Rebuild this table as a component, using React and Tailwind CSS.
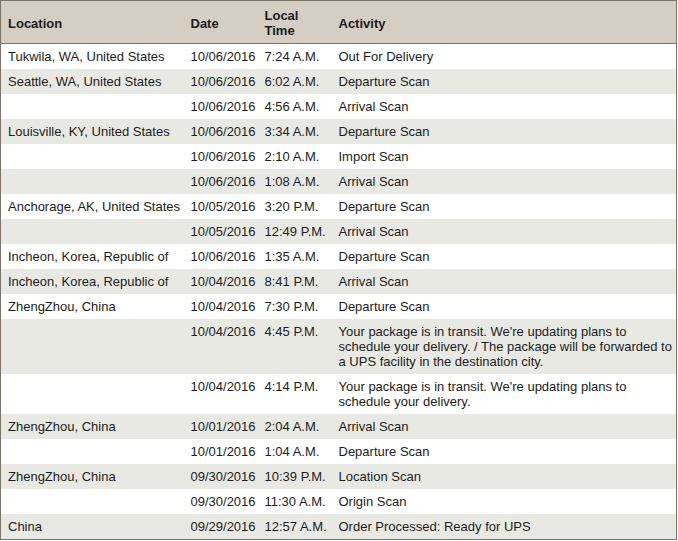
import React from 'react';

const rows = [
  ['Tukwila, WA, United States', '10/06/2016', '7:24 A.M.', 'Out For Delivery'],
  ['Seattle, WA, United States', '10/06/2016', '6:02 A.M.', 'Departure Scan'],
  ['', '10/06/2016', '4:56 A.M.', 'Arrival Scan'],
  ['Louisville, KY, United States', '10/06/2016', '3:34 A.M.', 'Departure Scan'],
  ['', '10/06/2016', '2:10 A.M.', 'Import Scan'],
  ['', '10/06/2016', '1:08 A.M.', 'Arrival Scan'],
  ['Anchorage, AK, United States', '10/05/2016', '3:20 P.M.', 'Departure Scan'],
  ['', '10/05/2016', '12:49 P.M.', 'Arrival Scan'],
  ['Incheon, Korea, Republic of', '10/06/2016', '1:35 A.M.', 'Departure Scan'],
  ['Incheon, Korea, Republic of', '10/04/2016', '8:41 P.M.', 'Arrival Scan'],
  ['ZhengZhou, China', '10/04/2016', '7:30 P.M.', 'Departure Scan'],
  [
    '',
    '10/04/2016',
    '4:45 P.M.',
    "Your package is in transit. We're updating plans to schedule your delivery. / The package will be forwarded to a UPS facility in the destination city.",
  ],
  [
    '',
    '10/04/2016',
    '4:14 P.M.',
    "Your package is in transit. We're updating plans to schedule your delivery.",
  ],
  ['ZhengZhou, China', '10/01/2016', '2:04 A.M.', 'Arrival Scan'],
  ['', '10/01/2016', '1:04 A.M.', 'Departure Scan'],
  ['ZhengZhou, China', '09/30/2016', '10:39 P.M.', 'Location Scan'],
  ['', '09/30/2016', '11:30 A.M.', 'Origin Scan'],
  ['China', '09/29/2016', '12:57 A.M.', 'Order Processed: Ready for UPS'],
];

export default function App() {
  return (
    <div className="bg-white w-[678px] h-[541px] font-['Liberation_Sans',Arial,sans-serif] text-[13px] leading-[15px] text-[#1c1c1c]">
      <table className="w-[677px] table-fixed border-collapse border border-[#7d7367]">
        <colgroup>
          <col className="w-[183px]" />
          <col className="w-[74px]" />
          <col className="w-[74px]" />
          <col />
        </colgroup>
        <thead>
          <tr className="bg-[#d5cec2] border-b border-[#7d7367]">
            <th className="text-left font-bold align-middle pl-[7px] pr-1 pt-[7px] pb-[5px]">Location</th>
            <th className="text-left font-bold align-middle pl-[7px] pr-1 pt-[7px] pb-[5px]">Date</th>
            <th className="text-left font-bold align-middle pl-[7px] pr-1 pt-[7px] pb-[5px]">
              Local
              <br />
              Time
            </th>
            <th className="text-left font-bold align-middle pl-[7px] pr-1 pt-[7px] pb-[5px]">Activity</th>
          </tr>
        </thead>
        <tbody>
          {rows.map((r, i) => (
            <tr key={i} className={i % 2 === 1 ? 'bg-[#e9e9e4]' : 'bg-white'}>
              <td className="align-top pl-[7px] pr-1 py-[5px] whitespace-nowrap">{r[0]}</td>
              <td className="align-top pl-[7px] pr-1 py-[5px] whitespace-nowrap">{r[1]}</td>
              <td className="align-top pl-[7px] pr-1 py-[5px] whitespace-nowrap">{r[2]}</td>
              <td className="align-top pl-[7px] pr-0 py-[5px]">{r[3]}</td>
            </tr>
          ))}
        </tbody>
      </table>
    </div>
  );
}
